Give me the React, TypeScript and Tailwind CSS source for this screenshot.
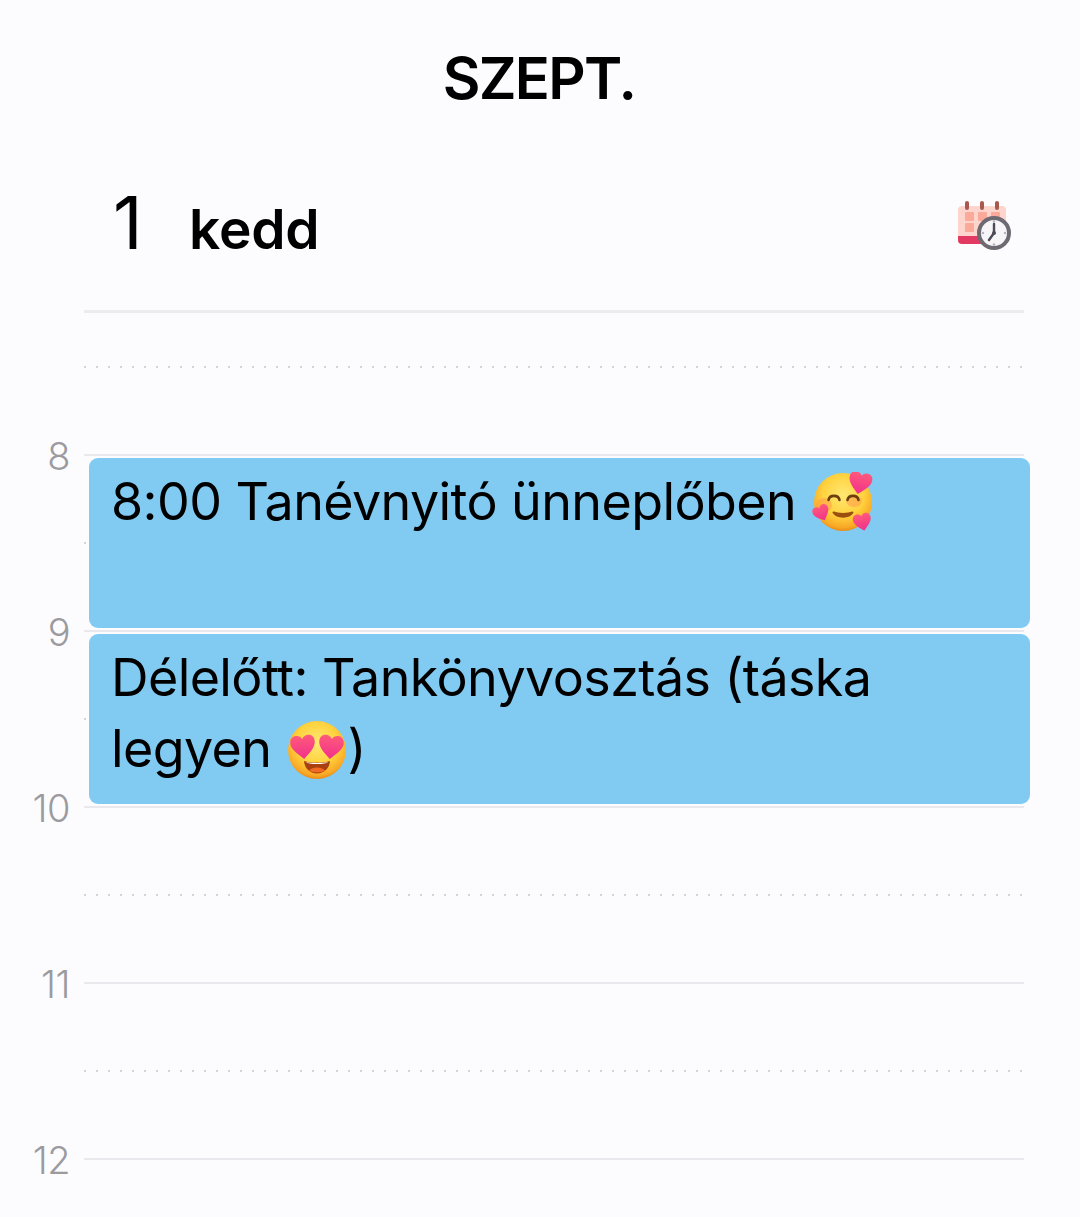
const FONT = "font-['Inter','Noto_Sans',sans-serif]";

function FaceDefs({ id }: { id: string }) {
  return (
    <defs>
      <radialGradient id={id} cx="50%" cy="38%" r="62%">
        <stop offset="0%" stopColor="#ffe873" />
        <stop offset="58%" stopColor="#ffd23e" />
        <stop offset="90%" stopColor="#f9a825" />
        <stop offset="100%" stopColor="#e88c17" />
      </radialGradient>
      <linearGradient id={id + "h"} x1="0" y1="0" x2="0" y2="1">
        <stop offset="0%" stopColor="#ff5a7a" />
        <stop offset="100%" stopColor="#f0308c" />
      </linearGradient>
    </defs>
  );
}

const HEART = "M0 -5.2C-1.6 -9 -8.2 -8.6 -8.2 -3.2C-8.2 1.4 -3 5 0 8C3 5 8.2 1.4 8.2 -3.2C8.2 -8.6 1.6 -9 0 -5.2Z";

function HeartsFace() {
  return (
    <svg width="62" height="60" viewBox="0 0 62 60" className="block">
      <FaceDefs id="hf" />
      <circle cx="31" cy="30" r="29" fill="url(#hf)" />
      <ellipse cx="12" cy="33" rx="8" ry="7" fill="#ff9a4a" opacity="0.5" />
      <ellipse cx="42" cy="29" rx="8" ry="6" fill="#ff9a4a" opacity="0.55" />
      <path d="M16.5 28C17.5 22.5 26.5 22.5 27.5 28" fill="none" stroke="#6b3f10" strokeWidth="2.6" strokeLinecap="round" />
      <path d="M35.5 28C36.5 22.5 45.5 22.5 46.5 28" fill="none" stroke="#6b3f10" strokeWidth="2.6" strokeLinecap="round" />
      <path d="M21.5 40.5C25 46 37 46 40.5 40.5C36 42.5 26 42.5 21.5 40.5Z" fill="#9a4f10" stroke="#9a4f10" strokeWidth="2" strokeLinejoin="round" />
      <g transform="translate(48 11) rotate(12) scale(1.4)"><path d={HEART} fill="url(#hfh)" /></g>
      <g transform="translate(9.5 41) rotate(-24) scale(1)"><path d={HEART} fill="url(#hfh)" /></g>
      <g transform="translate(50.5 50) rotate(-12) scale(1.1)"><path d={HEART} fill="url(#hfh)" /></g>
    </svg>
  );
}

function EyesFace() {
  return (
    <svg width="60" height="60" viewBox="0 0 60 60" className="block">
      <FaceDefs id="ef" />
      <circle cx="30" cy="30" r="29" fill="url(#ef)" />
      <path d="M17 41C24 43 36 43 43 41C42.5 49 36 53.5 30 53.5C24 53.5 17.5 49 17 41Z" fill="#a8400f" />
      <path d="M19 42C25 43.2 35 43.2 41 42C39.5 43.6 36 44 30 44C24 44 20.5 43.6 19 42Z" fill="#fff" />
      <path d="M22 50.5C25.5 46.5 34.5 46.5 38 50.5C34.5 53 25.5 53 22 50.5Z" fill="#f06a24" />
      <g transform="translate(16 27) rotate(-6) scale(1.5)"><path d={HEART} fill="url(#efh)" /></g>
      <g transform="translate(44 27) rotate(6) scale(1.5)"><path d={HEART} fill="url(#efh)" /></g>
    </svg>
  );
}

function CalendarClock() {
  return (
    <svg width="54" height="50" viewBox="0 0 54 50">
      <rect x="0" y="6" width="48" height="38" rx="4" fill="#fdd5cc" />
      <path d="M0 36H48V40A4 4 0 0 1 44 44H4A4 4 0 0 1 0 40Z" fill="#e23a62" />
      <rect x="7" y="12" width="9" height="9" rx="1" fill="#fba99a" />
      <rect x="20" y="12" width="9" height="9" rx="1" fill="#fba99a" />
      <rect x="33" y="12" width="9" height="9" rx="1" fill="#fba99a" />
      <rect x="7" y="23" width="9" height="9" rx="1" fill="#fba99a" />
      <rect x="7" y="1" width="4" height="9" rx="2" fill="#a9584d" />
      <rect x="22" y="1" width="4" height="9" rx="2" fill="#a9584d" />
      <rect x="37" y="1" width="4" height="9" rx="2" fill="#a9584d" />
      <circle cx="36" cy="33" r="15" fill="#f6f5f8" stroke="#6d6a72" strokeWidth="4" />
      <path d="M36 24V33L31 40" fill="none" stroke="#4e4b55" strokeWidth="2.4" strokeLinecap="round" strokeLinejoin="round" />
      <circle cx="36" cy="33" r="2" fill="#4e4b55" />
      <circle cx="36" cy="21.5" r="1.2" fill="#b4b2ba" />
      <circle cx="47" cy="33" r="1.2" fill="#b4b2ba" />
      <circle cx="25" cy="33" r="1.2" fill="#b4b2ba" />
      <circle cx="36" cy="44.5" r="1.2" fill="#b4b2ba" />
    </svg>
  );
}

function Dotted() {
  return (
    <div className="h-[88px] pl-[84px] pr-[56px]">
      <div className="h-[2px] bg-[radial-gradient(circle,#d4d4d8_1px,transparent_1.2px)] bg-[length:12px_2px] bg-[position:-5px_0] bg-repeat-x" />
    </div>
  );
}

function Hour({ label }: { label: string }) {
  return (
    <div className="h-[88px] flex">
      <div className="w-[84px] h-[2px] flex items-center justify-end pr-[14px]">
        <span className="text-[38px] font-light text-[#9b9b9f] leading-none tracking-[-0.5px] mt-[1px]">{label}</span>
      </div>
      <div className="w-[940px] h-[2px] bg-[#e9e9ed]" />
    </div>
  );
}

function EventCard({ className, children }: { className: string; children: React.ReactNode }) {
  return (
    <div className={"absolute left-[89px] w-[941px] h-[170px] bg-[#81cbf2] rounded-[9px] pl-[22px] pr-[120px] pt-[8px] text-[52px] leading-[71px] text-black tracking-[-0.6px] " + className}>
      {children}
    </div>
  );
}

export default function App() {
  return (
    <div className={"w-[1080px] h-[1217px] overflow-hidden bg-[#fcfcfe] " + FONT}>
      <div className="h-[156px] flex items-center justify-center">
        <h1 className="text-[58px] font-semibold text-black tracking-[-1.7px] leading-none -ml-[2px]">SZEPT.</h1>
      </div>
      <div className="h-[154px] flex items-center w-[940px] ml-[84px] pl-[29px] pr-[12px]">
        <span className="text-[73px] font-normal text-black leading-none w-[76px] -mt-[22px]">1</span>
        <span className="text-[55px] font-semibold text-black leading-none -mt-[8px] tracking-[-0.2px]">kedd</span>
        <div className="ml-auto -mt-[16px]"><CalendarClock /></div>
      </div>
      <div className="h-[3px] bg-[#ececef] w-[940px] ml-[84px]" />
      <div className="relative pt-[53px]">
        <Dotted />
        <Hour label="8" />
        <Dotted />
        <Hour label="9" />
        <Dotted />
        <Hour label="10" />
        <Dotted />
        <Hour label="11" />
        <Dotted />
        <Hour label="12" />
        <EventCard className="top-[145px]">
          8:00 Tanévnyitó ünneplőben <span className="inline-block align-top mt-[6px] ml-[2px]"><HeartsFace /></span>
        </EventCard>
        <EventCard className="top-[321px]">
          Délelőtt: Tankönyvosztás (táska legyen <span className="inline-block align-top mt-[7px] ml-[2px]"><EyesFace /></span>)
        </EventCard>
      </div>
    </div>
  );
}
